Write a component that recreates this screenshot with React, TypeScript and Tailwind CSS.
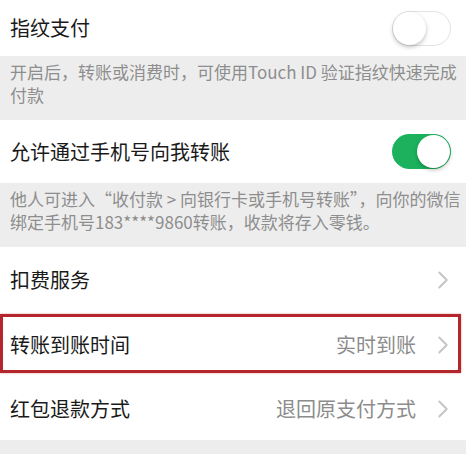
import { ChevronRight } from 'lucide-react'

const font = { fontFamily: '"Noto Sans CJK SC", "Noto Sans", sans-serif' }

function Toggle({ on }: { on: boolean }) {
  return (
    <div
      className={`relative h-[35px] w-[59px] rounded-full ${
        on ? 'bg-[#1cb25d]' : 'bg-white border border-[#e2e2e2]'
      }`}
    >
      <div
        className={`absolute h-[33px] w-[33px] rounded-full bg-white shadow-[0_2px_4px_rgba(0,0,0,0.25)] ${
          on ? 'right-[1px] top-[1px]' : 'left-0 top-0'
        }`}
      />
    </div>
  )
}

function SwitchRow({ title, on, h }: { title: string; on: boolean; h: string }) {
  return (
    <div className={`flex items-center justify-between bg-white pl-[10px] pr-[15px] ${h}`}>
      <span className="text-[20px] text-[#1a1a1a]">{title}</span>
      <Toggle on={on} />
    </div>
  )
}

function Note({ children }: { children: React.ReactNode }) {
  return (
    <div className="bg-[#ededed] px-[10px] pt-[4px] h-[64px] text-[17px] leading-[23px] text-[#8e8e8e] whitespace-nowrap">
      {children}
    </div>
  )
}

function LinkRow({
  title,
  value,
  highlight,
  h,
}: {
  title: string
  value?: string
  highlight?: boolean
  h: string
}) {
  return (
    <div className={`relative flex items-center bg-white pl-[10px] pr-[8px] ${h}`}>
      <span className="flex-1 text-[20px] text-[#1a1a1a]">{title}</span>
      {value && <span className="mr-[12px] text-[20px] text-[#8c8c8c]">{value}</span>}
      <ChevronRight className="h-[30px] w-[30px] text-[#c4c4c4]" strokeWidth={1.5} />
      {highlight && (
        <div className="absolute left-0 right-[5px] top-[1px] bottom-[4px] border-[3px] border-[#b5262c] shadow-[0_0_2px_rgba(150,0,0,0.4)]" />
      )}
    </div>
  )
}

export default function App() {
  return (
    <div className="w-[466px] h-[454px] overflow-hidden bg-[#ededed]" style={font}>
      <SwitchRow title="指纹支付" on={false} h="h-[56px]" />
      <Note>
        开启后，转账或消费时，可使用Touch ID 验证指纹快速完成
        <br />
        付款
      </Note>
      <SwitchRow title="允许通过手机号向我转账" on={true} h="h-[63px]" />
      <Note>
        他人可进入“收付款 &gt; 向银行卡或手机号转账”，向你的微信
        <br />
        绑定手机号183****9860转账，收款将存入零钱。
      </Note>
      <LinkRow title="扣费服务" h="h-[66px]" />
      <LinkRow title="转账到账时间" value="实时到账" highlight h="h-[64px]" />
      <LinkRow title="红包退款方式" value="退回原支付方式" h="h-[63px]" />
    </div>
  )
}
